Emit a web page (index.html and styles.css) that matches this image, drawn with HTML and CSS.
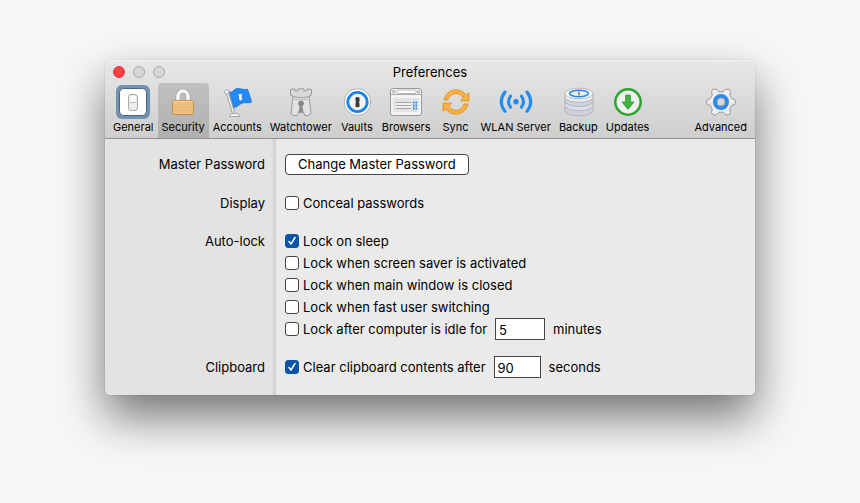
FILE: index.html
```
<!DOCTYPE html>
<html lang="en">
    <head>
       <meta charset="utf-8">
       <meta name="viewport" content="width=device-width, initial-scale=1">
       <title>Preferences</title>
       <link rel="stylesheet" href="styles.css">
    </head>
    <body>
       <main class="window">
          <header class="top">
             <div class="titlebar">
                <div class="lights">
                   <button class="light close" type="button" aria-label="Close"></button>
                   <button class="light" type="button" aria-label="Minimize"></button>
                   <button class="light" type="button" aria-label="Zoom"></button>
                </div>
                <h1 class="title">Preferences</h1>
             </div>
             <!-- toolbar -->
             <nav class="toolbar">
                <button class="tool" type="button">
                   <svg class="icon" viewBox="0 0 34 34">
                      <rect width="34" height="34" rx="6" fill="#7391b1"/>
                      <rect x="3.5" y="3.5" width="27" height="27" rx="4" fill="#fff" stroke="#456486"/>
                      <rect x="12.5" y="9.5" width="9" height="16" rx="2.5" fill="#ececec" stroke="#aaa"/>
                      <path d="M14 17.5h6" stroke="#bbb"/>
                      <rect x="14" y="11" width="6" height="6" fill="#fafafa"/>
                   </svg>
                   <span>General</span>
                </button>
                <button class="tool active" type="button">
                   <svg class="icon" viewBox="0 0 34 34">
                      <path d="M12 16v-4.500a5 5.500 0 0 1 10 0V16" fill="none" stroke="#a5a5a5" stroke-width="5"/>
                      <path d="M12 16v-4.500a5 5.500 0 0 1 10 0V16" fill="none" stroke="#f4f4f4" stroke-width="3.600"/>
                      <rect x="6.5" y="15.5" width="21" height="14" rx="1.5" fill="#eebf7f" stroke="#c39150"/>
                      <path d="M7.500 16.500h19" stroke="#f8d7a5"/>
                      <path d="M7 19.500h20M7 22.500h20M7 25.500h20" stroke="#e6b471" stroke-width=".7"/>
                   </svg>
                   <span>Security</span>
                </button>
                <button class="tool" type="button">
                   <svg class="icon" viewBox="0 0 34 34">
                      <path d="M9.500 7c3 1 4.500-3 7.500-3.500 4-.6 6 2 10.500.8L31.700 17c-3 1.500-6 .2-9 1-3.500 1-5 4.500-9 4.300z" fill="#2389f5" stroke="#1873dc" stroke-width=".8"/>
                      <path d="M7.500 8.500L14 29" stroke="#8f8f8f" stroke-width="3"/>
                      <path d="M7.500 8.500L14 29" stroke="#f2f2f2" stroke-width="1.5"/>
                      <circle cx="6.7" cy="7" r="2.2" fill="#f4f4f4" stroke="#999" stroke-width=".8"/>
                      <path d="M11 28.500h7l2 3H9.500z" fill="#f1f1f1" stroke="#999" stroke-width=".8"/>
                      <path d="M18.500 9.500l2.500-.8 1 1.600-.5 1 .8 3.300-2.300.8-1-1.600.4-1z" fill="#fff"/>
                   </svg>
                   <span>Accounts</span>
                </button>
                <button class="tool" type="button">
                   <svg class="icon" viewBox="0 0 34 34">
                      <path d="M9 11L7 28.500l2.500 2h3.800l1-3h5.400l1 3h3.800l2.500-2L25 11z" fill="#e2e2e2" stroke="#999" stroke-linejoin="round"/>
                      <path d="M6.500 4.500l4-.7.600 2h3v-2h5.800v2h3l.6-2 4 .7V10L23.500 12q-6.500 1.500-13 0l-4-2z" fill="#d8d8d8" stroke="#999" stroke-linejoin="round"/>
                      <path d="M10 14.200q7 1.500 14 0" fill="none" stroke="#b5b5b5"/>
                      <circle cx="17" cy="18.500" r="2.800" fill="#858585"/>
                      <path d="M15.800 20h2.400l1.200 7h-4.800z" fill="#8b8b8b"/>
                   </svg>
                   <span>Watchtower</span>
                </button>
                <button class="tool" type="button">
                   <svg class="icon" viewBox="0 0 34 34">
                      <circle cx="17.5" cy="17" r="13.300" fill="#fff" stroke="#a9a9a9" stroke-width=".9"/>
                      <circle cx="17.5" cy="17" r="9.700" fill="#f3f3f3" stroke="#1e83e8" stroke-width="2.800"/>
                      <path d="M15.500 12.500q2-1 4 0v4l-.8.8.8.900v3.500q-2 1-4 0v-4l.8-.8-.8-.9z" fill="#3a3a3a"/>
                   </svg>
                   <span>Vaults</span>
                </button>
                <button class="tool" type="button">
                   <svg class="icon" viewBox="0 0 34 34">
                      <rect x="1.5" y="3.5" width="31" height="27" rx="2.5" fill="#f4f4f4" stroke="#999"/>
                      <path d="M2 9.500h30" stroke="#aaa"/>
                      <rect x="8" y="5" width="19" height="3.500" rx="1" fill="#fff" stroke="#aaa" stroke-width=".8"/>
                      <circle cx="4.700" cy="6.700" r="1.300" fill="#ddd" stroke="#999" stroke-width=".7"/>
                      <circle cx="29.500" cy="6.700" r="1.300" fill="#ddd" stroke="#999" stroke-width=".7"/>
                      <rect x="4" y="13" width="26" height="14" rx="1.500" fill="#e3e3e3"/>
                      <path d="M7 17.500h15M7 20.500h15M7 23.500h15" stroke="#a4a4a4"/>
                      <path d="M7 19h15M7 22h15" stroke="#fff"/>
                      <path d="M24 17.500h1.500m1 0H28M24 20.500h1.500m1 0H28M24 23.500h1.500m1 0H28" stroke="#2588e8" stroke-width="2"/>
                   </svg>
                   <span>Browsers</span>
                </button>
                <button class="tool" type="button">
                   <svg class="icon" viewBox="0 0 34 34">
                      <g id="arrow" fill="#fbb040" stroke="#d98719" stroke-width=".7" stroke-linejoin="round">
                         <path d="M5 15C6 9 11 4.800 17 4.800c4.200 0 7.800 2 10 5l3-2V16h-8.500l2.600-3.200C22.700 10.200 20 8.700 17 8.700c-4 0-7 2.500-8 6.300z"/>
                      </g>
                      <use href="#arrow" transform="rotate(180 17 17)"/>
                   </svg>
                   <span>Sync</span>
                </button>
                <button class="tool" type="button">
                   <svg class="icon" viewBox="0 0 34 34">
                      <circle cx="17" cy="16.700" r="2.700" fill="#1f8bef"/>
                      <g fill="none" stroke="#1f8bef" stroke-width="3" stroke-linecap="round">
                         <path d="M11.500 11.200q-4 5.500 0 11M22.500 11.200q4 5.500 0 11"/>
                         <path d="M6 7q-7.500 9.700 0 19.400M28 7q7.500 9.700 0 19.400"/>
                      </g>
                   </svg>
                   <span>WLAN Server</span>
                </button>
                <button class="tool" type="button">
                   <svg class="icon" viewBox="0 0 34 34">
                      <g fill="#cfd2da" stroke="#a3a6ae" stroke-width=".7">
                         <path d="M4 21v4.500c0 3 6 5.300 14 5.300s14-2.300 14-5.300V21z"/>
                         <path d="M4 16v4.500c0 3 6 5.300 14 5.300s14-2.300 14-5.300V16z" fill="#dcdee5"/>
                         <path d="M4 12v4c0 3 6 5.300 14 5.300S32 19 32 16v-4z"/>
                         <path d="M4 8.500v3.500c0 3 6 5.300 14 5.300s14-2.300 14-5.300V8.500z" fill="#ebecf0"/>
                         <ellipse cx="18" cy="8.500" rx="14" ry="5.300" fill="#fafafa"/>
                      </g>
                      <ellipse cx="18" cy="8.500" rx="9.500" ry="3.300" fill="#f1f1f1" stroke="#1e86e7" stroke-width="1.500"/>
                      <path d="M18 6.500v4" stroke="#777" stroke-width="1.500"/>
                   </svg>
                   <span>Backup</span>
                </button>
                <button class="tool" type="button">
                   <svg class="icon" viewBox="0 0 34 34">
                      <circle cx="17" cy="17" r="12.700" fill="#f0f0f3" stroke="#2ba52b" stroke-width="2.500"/>
                      <path d="M14.500 10.500q2.500-1.500 5 0V17H23l-6 7.500-6-7.500h3.500z" fill="#43b33d" stroke="#2a9a2a" stroke-width=".7" stroke-linejoin="round"/>
                   </svg>
                   <span>Updates</span>
                </button>
                <button class="tool last" type="button">
                   <svg class="icon" viewBox="0 0 34 34">
                      <path d="M9 4l3.500.3L15 6.800h4l2.500-2.500L25 4l1.500 2.500-.7 3.500 1.900 3.500 3.300 1.200.5 2.300-.5 2.300-3.300 1.200-1.900 3.500.7 3.500L25 30l-3.500-.3L19 27.200h-4l-2.500 2.500L9 30l-1.500-2.500.7-3.500-1.900-3.500L3 19.300 2.500 17l.5-2.300 3.300-1.200L8.200 10l-.7-3.500z" fill="#ececec" stroke="#9b9b9b" stroke-linejoin="round"/>
                      <circle cx="17" cy="17" r="6" fill="#ccc" stroke="#2a8cea" stroke-width="4"/>
                      <circle cx="17" cy="17" r="4" fill="#d8d8d8" stroke="#a1a1a1" stroke-width="1"/>
                   </svg>
                   <span>Advanced</span>
                </button>
             </nav>
          </header>
          <!-- security settings -->
          <form class="pane">
             <div class="row tall">
                <div class="label">Master Password</div>
                <div class="fields">
                   <button class="push" type="button">Change Master Password</button>
                </div>
             </div>
             <div class="row">
                <div class="label">Display</div>
                <div class="fields">
                   <div class="line"><label class="check"><input type="checkbox">Conceal passwords</label></div>
                </div>
             </div>
             <div class="row">
                <div class="label">Auto-lock</div>
                <div class="fields">
                   <div class="line"><label class="check"><input type="checkbox" checked>Lock on sleep</label></div>
                   <div class="line"><label class="check"><input type="checkbox">Lock when screen saver is activated</label></div>
                   <div class="line"><label class="check"><input type="checkbox">Lock when main window is closed</label></div>
                   <div class="line"><label class="check"><input type="checkbox">Lock when fast user switching</label></div>
                   <div class="line">
                      <label class="check"><input type="checkbox">Lock after computer is idle for</label>
                      <input class="number" id="idle" type="text" value="5">
                      <label for="idle">minutes</label>
                   </div>
                </div>
             </div>
             <div class="row">
                <div class="label">Clipboard</div>
                <div class="fields">
                   <div class="line">
                      <label class="check"><input type="checkbox" checked>Clear clipboard contents after</label>
                      <input class="number short" id="clear" type="text" value="90">
                      <label for="clear">seconds</label>
                   </div>
                </div>
             </div>
          </form>
       </main>
    </body>
</html>
```
FILE: styles.css
```
*
{
   box-sizing: border-box;
}
body
{
   margin: 0;
   min-height: 100vh;
   padding: 60px 105px;
   background-color: #f7f7f7;
   color: #000;
   font-family: Inter, "Liberation Sans", sans-serif;
   font-size: 13px;
   line-height: 22px;
}
button, input
{
   margin: 0;
   font-family: inherit;
   font-size: inherit;
   color: inherit;
}
.window
{
   border-radius: 5px;
   background-color: #eaeaea;
   box-shadow: 0 0 1px rgba(0, 0, 0, 0.5), 0 22px 46px rgba(0, 0, 0, 0.53);
}
.top
{
   border-bottom: 1px solid #8f8f8f;
   border-radius: 5px 5px 0 0;
   background: linear-gradient(#e8e8e8, #cecece);
   box-shadow: inset 0 1px 0 #f4f4f4;
}
.titlebar
{
   display: grid;
   grid-template-columns: 1fr auto 1fr;
   align-items: center;
   height: 23px;
   padding: 1px 8px 0;
}
.title
{
   margin: 0;
   font-size: 13px;
   font-weight: 400;
}
.lights
{
   display: flex;
   gap: 8px;
}
.light
{
   width: 12px;
   height: 12px;
   padding: 0;
   border: 1px solid #aaa;
   border-radius: 50%;
   background-color: #d6d6d6;
}
.close
{
   border-color: #e0343a;
   background-color: #fc4046;
}
.toolbar
{
   display: flex;
   padding: 0 4px;
}
.tool
{
   display: flex;
   flex-direction: column;
   align-items: center;
   gap: 1px;
   padding: 2px 4px 4px;
   border: 0;
   background: none;
   font-size: 11px;
   line-height: 14px;
   white-space: nowrap;
}
.active
{
   border-radius: 4px 4px 0 0;
   background-color: rgba(0, 0, 0, 0.14);
}
.last
{
   margin-left: auto;
}
.icon
{
   width: 34px;
   height: 34px;
}
/* label column on the left, fields on the right */
.pane
{
   display: flex;
   flex-direction: column;
   gap: 16px;
   padding: 13px 0 17px;
   border-radius: 0 0 5px 5px;
   background: linear-gradient(to right, #e3e3e3 166px, #d0d0d0 171px, #eaeaea 171px);
}
.row
{
   display: grid;
   grid-template-columns: 160px 1fr;
   gap: 20px;
}
.tall
{
   line-height: 24px;
}
.label
{
   text-align: right;
}
.line, .check
{
   display: flex;
   align-items: center;
}
.line
{
   gap: 8px;
   height: 22px;
}
.check
{
   gap: 4px;
}
.push
{
   height: 21px;
   padding: 0 12px;
   border: 1px solid #444;
   border-radius: 4px;
   background-color: #fff;
   line-height: 19px;
}
input[type="checkbox"]
{
   appearance: none;
   width: 14px;
   height: 14px;
   border: 1px solid #444;
   border-radius: 3px;
   background-color: #fff;
}
input[type="checkbox"]:checked
{
   border-color: #0a55a8;
   background: #0a55a8 url("data:image/svg+xml,%3Csvg xmlns='http://www.w3.org/2000/svg' viewBox='0 0 12 12'%3E%3Cpath d='M3 6.500l2 2.500 4-6.500' fill='none' stroke='white' stroke-width='1.500' stroke-linecap='round'/%3E%3C/svg%3E");
}
.number
{
   width: 50px;
   height: 22px;
   padding: 1px 3px 0;
   border: 1px solid #444;
   background-color: #fff;
}
.short
{
   width: 47px;
}
```
